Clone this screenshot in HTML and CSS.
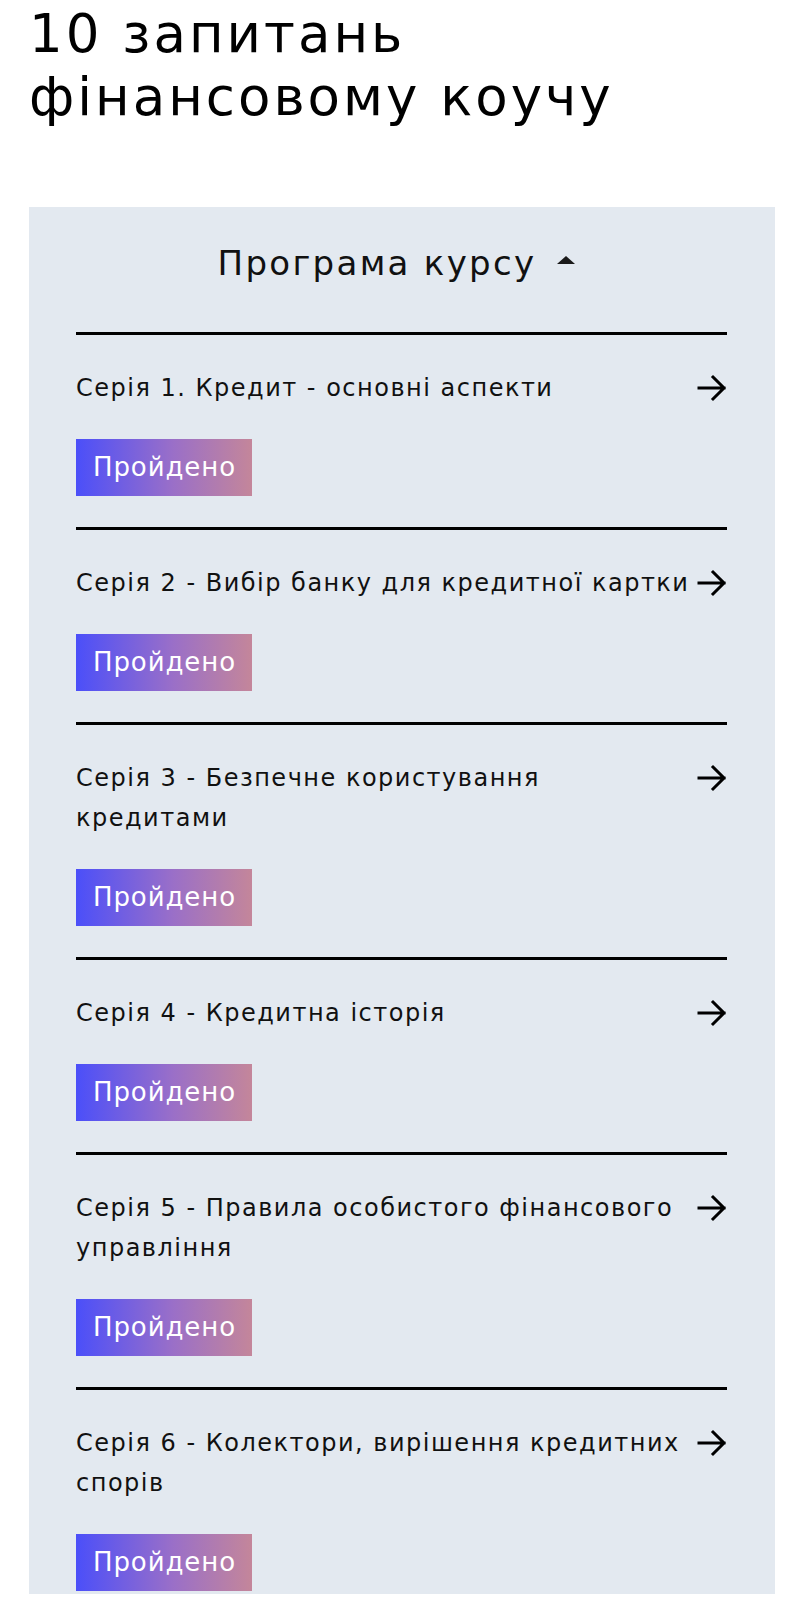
FILE: index.html
```html
<!DOCTYPE html>
<html lang="uk">
<head>
<meta charset="utf-8">
<title>10 запитань фінансовому коучу</title>
<link rel="stylesheet" href="styles.css">
</head>
<body>
<main class="page">
  <h1 class="title">10 запитань<br>фінансовому коучу</h1>
  <section class="program">
    <div class="program-head">
      <span class="program-title">Програма курсу</span>
      <span class="caret"></span>
    </div>
    <ul class="series-list">
      <li class="series">
        <div class="series-row">
          <span class="series-name">Серія 1. Кредит - основні аспекти</span>
          <svg class="arrow" viewBox="0 0 30 30" aria-hidden="true"><path d="M2 15H27M16 4L27 15L16 26" fill="none" stroke="#000" stroke-width="3" stroke-linecap="square" stroke-linejoin="miter"/></svg>
        </div>
        <span class="badge">Пройдено</span>
      </li>
      <li class="series">
        <div class="series-row">
          <span class="series-name">Серія 2 - Вибір банку для кредитної картки</span>
          <svg class="arrow" viewBox="0 0 30 30" aria-hidden="true"><path d="M2 15H27M16 4L27 15L16 26" fill="none" stroke="#000" stroke-width="3" stroke-linecap="square" stroke-linejoin="miter"/></svg>
        </div>
        <span class="badge">Пройдено</span>
      </li>
      <li class="series">
        <div class="series-row">
          <span class="series-name">Серія 3 - Безпечне користування кредитами</span>
          <svg class="arrow" viewBox="0 0 30 30" aria-hidden="true"><path d="M2 15H27M16 4L27 15L16 26" fill="none" stroke="#000" stroke-width="3" stroke-linecap="square" stroke-linejoin="miter"/></svg>
        </div>
        <span class="badge">Пройдено</span>
      </li>
      <li class="series">
        <div class="series-row">
          <span class="series-name">Серія 4 - Кредитна історія</span>
          <svg class="arrow" viewBox="0 0 30 30" aria-hidden="true"><path d="M2 15H27M16 4L27 15L16 26" fill="none" stroke="#000" stroke-width="3" stroke-linecap="square" stroke-linejoin="miter"/></svg>
        </div>
        <span class="badge">Пройдено</span>
      </li>
      <li class="series">
        <div class="series-row">
          <span class="series-name">Серія 5 - Правила особистого фінансового управління</span>
          <svg class="arrow" viewBox="0 0 30 30" aria-hidden="true"><path d="M2 15H27M16 4L27 15L16 26" fill="none" stroke="#000" stroke-width="3" stroke-linecap="square" stroke-linejoin="miter"/></svg>
        </div>
        <span class="badge">Пройдено</span>
      </li>
      <li class="series series-last">
        <div class="series-row">
          <span class="series-name">Серія 6 - Колектори, вирішення кредитних спорів</span>
          <svg class="arrow" viewBox="0 0 30 30" aria-hidden="true"><path d="M2 15H27M16 4L27 15L16 26" fill="none" stroke="#000" stroke-width="3" stroke-linecap="square" stroke-linejoin="miter"/></svg>
        </div>
        <span class="badge">Пройдено</span>
      </li>
    </ul>
  </section>
</main>
</body>
</html>
```

FILE: styles.css
```css
html, body {
  margin: 0;
  padding: 0;
  background: #ffffff;
}

body {
  font-family: "DejaVu Sans", "Noto Sans", sans-serif;
  color: #000;
}

.page {
  padding: 0 22px 0 29px;
}

.title {
  margin: 0;
  padding-top: 2px;
  font-size: 53px;
  line-height: 63px;
  font-weight: 400;
  letter-spacing: 3px;
  color: #000;
}

.program {
  margin-top: 79px;
  background: #e3e9f0;
  padding: 0 48px 3px 47px;
}

.program-head {
  display: flex;
  justify-content: center;
  align-items: center;
  gap: 21px;
  padding: 36px 10px 49px 0;
  height: 40px;
}

.program-title {
  font-size: 34px;
  line-height: 40px;
  letter-spacing: 2.3px;
  color: #111;
}

.caret {
  width: 0;
  height: 0;
  border-left: 9.5px solid transparent;
  border-right: 9.5px solid transparent;
  border-bottom: 8px solid #1a1a1a;
  margin-top: -6px;
}

.series-list {
  list-style: none;
  margin: 0;
  padding: 0;
}

.series {
  border-top: 3px solid #000;
  padding: 33px 0 31px;
}

.series-last {
  padding-bottom: 0;
}

.series-row {
  display: flex;
  align-items: flex-start;
  margin-bottom: 31px;
}

.series-name {
  flex: 1;
  font-size: 24px;
  line-height: 40px;
  letter-spacing: 1.5px;
  color: #111;
}

.arrow {
  flex-shrink: 0;
  width: 30px;
  height: 30px;
  margin-top: 5px;
}

.badge {
  display: inline-block;
  height: 57px;
  line-height: 57px;
  padding: 0 16px 0 17px;
  font-size: 26px;
  letter-spacing: 0.9px;
  color: #fff;
  background: linear-gradient(90deg, #4b4ff9 0%, #9a6fc8 55%, #c4869a 100%);
}
```
